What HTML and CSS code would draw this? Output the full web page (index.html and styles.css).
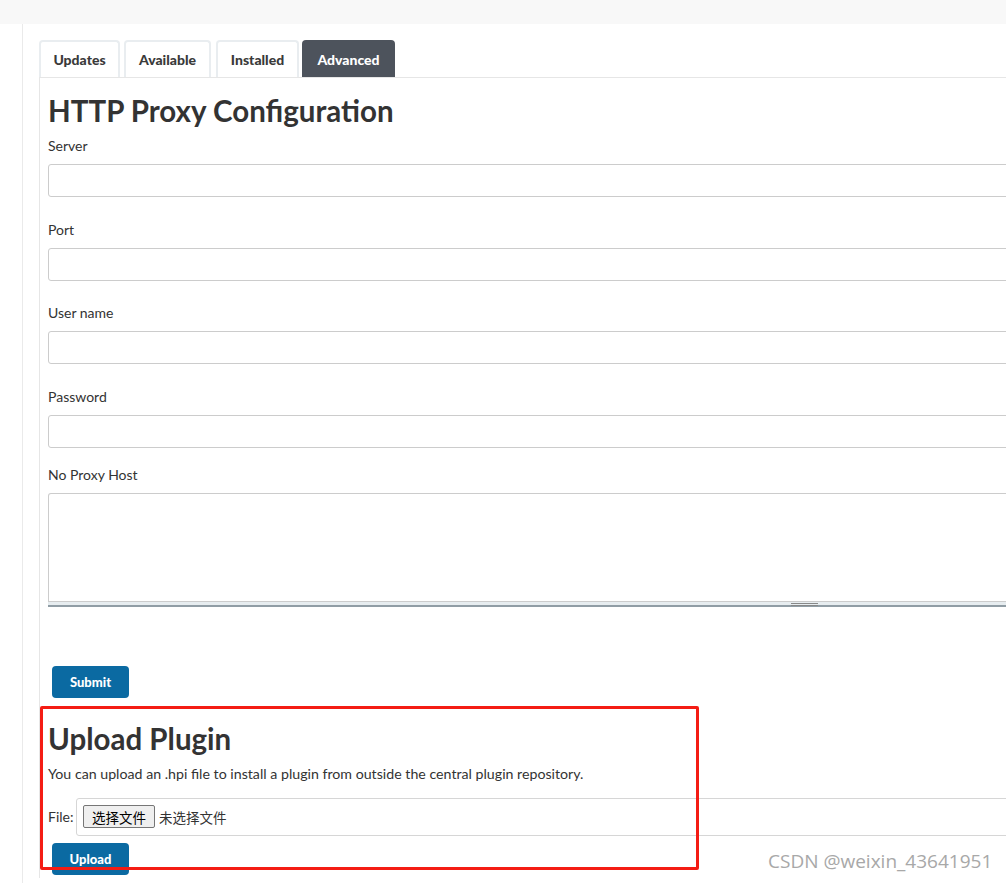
FILE: index.html
```html
<!DOCTYPE html>
<html lang="en">
<head>
<meta charset="utf-8">
<title>Plugin Manager - Advanced</title>
<link rel="stylesheet" href="styles.css">
</head>
<body>
<div class="topbar"></div>
<div class="main">
  <div class="sidebar"></div>
  <div class="content">
    <div class="tabs">
      <div class="tab t1">Updates</div>
      <div class="tab t2">Available</div>
      <div class="tab t3">Installed</div>
      <div class="tab t4 active">Advanced</div>
    </div>
    <div class="panel">
      <h1 class="title">HTTP Proxy Configuration</h1>
      <div class="field">
        <label class="label">Server</label>
        <input class="input" type="text">
      </div>
      <div class="field">
        <label class="label">Port</label>
        <input class="input" type="text">
      </div>
      <div class="field">
        <label class="label">User name</label>
        <input class="input" type="text">
      </div>
      <div class="field">
        <label class="label">Password</label>
        <input class="input" type="password">
      </div>
      <div class="field field-area">
        <label class="label">No Proxy Host</label>
        <textarea class="textarea"></textarea>
        <div class="resizer"><span class="grip"></span></div>
      </div>
      <button class="btn btn-submit">Submit</button>

      <h1 class="title title-upload">Upload Plugin</h1>
      <p class="desc">You can upload an .hpi file to install a plugin from outside the central plugin repository.</p>
      <div class="file-row">
        <span class="file-label">File:</span>
        <div class="file-box">
          <span class="file-btn">选择文件</span>
          <span class="file-none">未选择文件</span>
        </div>
      </div>
      <button class="btn btn-upload">Upload</button>
    </div>
  </div>
</div>
<div class="annot"></div>
<div class="watermark">CSDN @weixin_43641951</div>
</body>
</html>
```
FILE: styles.css
```css
html, body {
  margin: 0;
  padding: 0;
  background: #fff;
  overflow: hidden;
  width: 1006px;
  height: 883px;
}
body {
  font-family: "Lato", "Noto Sans CJK SC", sans-serif;
  color: #333;
  font-size: 14px;
  position: relative;
}
.topbar {
  height: 24px;
  background: #f8f8f8;
}
.main {
  display: flex;
  width: 1300px;
  height: 859px;
}
.sidebar {
  width: 22px;
  border-right: 1px solid #eaeaea;
  flex: none;
}
.content {
  padding: 16px 0 0 16px;
  flex: 1;
}
.tabs {
  display: flex;
  height: 37px;
}
.tab {
  box-sizing: border-box;
  height: 37px;
  border: 2px solid #e9edf0;
  border-bottom: none;
  border-radius: 4px 4px 0 0;
  font-weight: 900;
  font-size: 14px;
  color: #3a3a3a;
  display: flex;
  align-items: center;
  justify-content: center;
  padding-bottom: 1px;
}
.t1 { width: 81px; margin-right: 4px; }
.t2 { width: 87px; margin-right: 5px; }
.t3 { width: 83px; margin-right: 3px; }
.t4 { width: 93px; }
.tab.active {
  background: #4d535c;
  border-color: #4d535c;
  color: #fff;
}
.panel {
  border-top: 1px solid #e6e6e6;
  border-left: 1px solid #e6e6e6;
  padding: 0 0 0 8px;
  height: 800px;
}
.title {
  margin: 0;
  font-size: 29.5px;
  font-weight: 700;
  line-height: 34px;
  padding-top: 16px;
  color: #333;
}
.field {
  display: flex;
  flex-direction: column;
  margin-top: 8px;
}
.field + .field { margin-top: 22.5px; }
.field.field-area { margin-top: 17px; }
.label {
  line-height: 20px;
  height: 20px;
  margin-bottom: 8px;
  color: #333;
}
.input {
  box-sizing: border-box;
  height: 33px;
  width: 1000px;
  border: 1px solid #ccc;
  border-radius: 3px;
  margin: 0;
}
.textarea {
  box-sizing: border-box;
  height: 108px;
  width: 1000px;
  border: 1px solid #ccc;
  border-bottom: none;
  border-radius: 3px 3px 0 0;
  margin: 0;
  resize: none;
  display: block;
}
.resizer {
  box-sizing: border-box;
  height: 6px;
  width: 1000px;
  background: #e7edf0;
  border-top: 1px solid #ccc;
  border-bottom: 2px solid #909da5;
  position: relative;
}
.grip {
  position: absolute;
  left: 743px;
  top: 1px;
  width: 27px;
  height: 1px;
  border-top: 1px solid #888;
  border-bottom: 1px solid #888;
}
.btn {
  display: block;
  box-sizing: border-box;
  width: 77px;
  height: 32px;
  margin-left: 4px;
  background: #0b6aa2;
  color: #fff;
  border: none;
  border-radius: 4px;
  font-family: "Lato", sans-serif;
  font-weight: 900;
  font-size: 13px;
  padding: 0;
}
.btn-submit { margin-top: 59px; }
.title.title-upload { padding-top: 24px; }
.desc {
  margin: 9px 0 0 0;
  line-height: 18px;
  font-size: 14.2px;
}
.file-row {
  display: flex;
  align-items: center;
  margin-top: 15px;
}
.file-label {
  width: 28px;
}
.file-box {
  box-sizing: border-box;
  height: 38px;
  width: 1000px;
  border: 1px solid #d6d6d6;
  border-radius: 3px;
  display: flex;
  align-items: center;
  padding-left: 6px;
  font-family: "Noto Sans CJK SC", sans-serif;
  font-size: 13.5px;
}
.file-btn {
  box-sizing: border-box;
  height: 23px;
  width: 72px;
  background: #efefef;
  border: 1px solid #767676;
  border-radius: 2px;
  display: flex;
  align-items: center;
  justify-content: center;
  color: #000;
  margin-right: 4px;
}
.file-none { color: #333; }
.btn-upload { margin-top: 7px; }
.annot {
  position: absolute;
  left: 40px;
  top: 706px;
  width: 653px;
  height: 158px;
  border: 3px solid #f41c14;
  border-radius: 2px;
}
.watermark {
  position: absolute;
  left: 768px;
  top: 848px;
  font-family: "Open Sans", sans-serif;
  font-size: 19px;
  color: #a8a8a8;
  text-shadow: 0 0 1px #fff;
}
```
